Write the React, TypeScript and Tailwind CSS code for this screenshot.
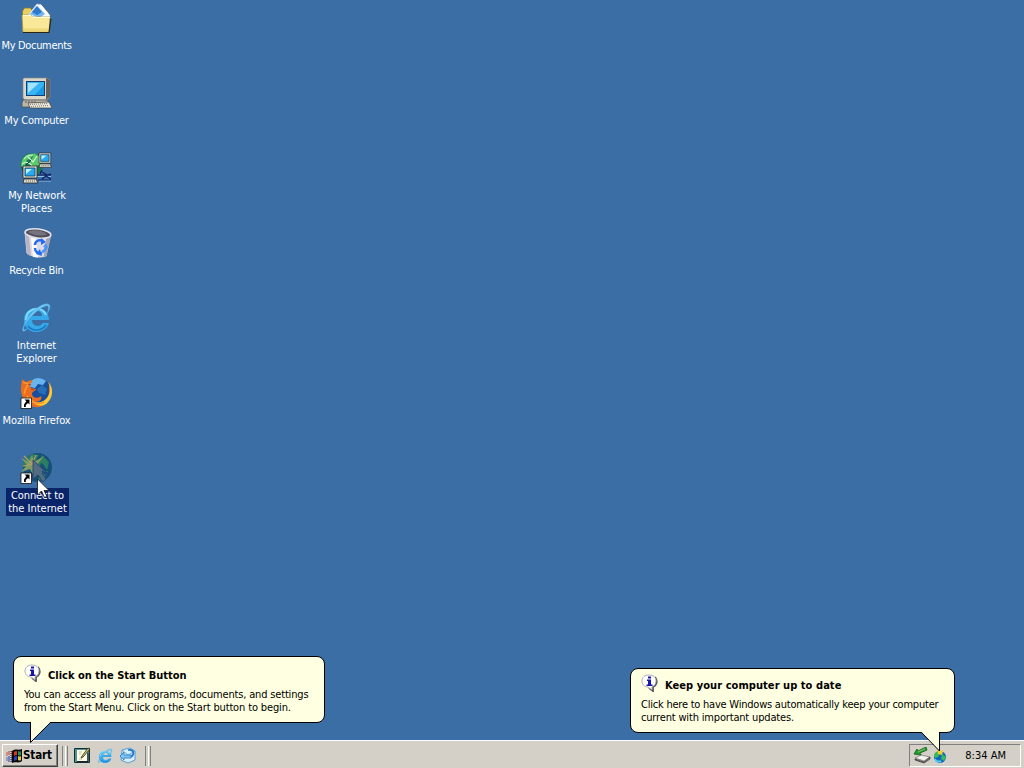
import type { ReactNode } from 'react';

const Documents = () => (
  <svg width="32" height="32" viewBox="0 0 32 32">
    <path d="M2.500 28V9l2-3h6l2 3h15v20z" fill="#e8cf60" stroke="#8a7a2a" strokeWidth=".8" />
    <path d="M5 17 17 2l4 1 9 11-5 5z" fill="#f4f8ff" stroke="#c8d8ea" strokeWidth=".8" />
    <path d="m10 12 7-8 8 8-6 4z" fill="#6fb2f0" />
    <path d="m12 10 5-6 5 6-5 3z" fill="#2f78cc" />
    <path d="m20 3 9 11" stroke="#fff" strokeWidth="2" />
    <path d="M2 13h9l2 2h17l-1 15H3z" fill="#f8e898" stroke="#a89c48" strokeWidth=".8" />
    <path d="M3 13.500h8l2 2h17" fill="none" stroke="#fffcd8" />
    <path d="M3 30.500h26l2-14" fill="none" stroke="#2c2810" strokeWidth="1.2" />
    <path d="M4 28h24" stroke="#ecd775" strokeWidth="3" />
  </svg>
);

const Computer = () => (
  <svg width="32" height="32" viewBox="0 0 32 32">
    <path d="M3 2 4 1h22l4 2v17l-3 3H5l-2-2z" fill="#d9d6ca" stroke="#8b8b85" strokeWidth=".7" />
    <path d="m26 1 4 2v17l-4 3z" fill="#62635f" />
    <path d="M6 4h19v15H6z" fill="#123c74" />
    <path d="M7 5h17v13H7z" fill="#37b5f4" />
    <path d="M8 6h11L8 16z" fill="#a4e4ff" />
    <path d="M15 18h9V8z" fill="#1a98e4" />
    <path d="M3 23h24l2 3v4H2v-4z" fill="#b9b5a8" stroke="#4c4b48" strokeWidth=".7" />
    <path d="M5 25h11" stroke="#59584f" strokeDasharray="2 1" />
    <path d="m8 26 21-1 3 6H10z" fill="#ece8dc" stroke="#3e3d3a" strokeWidth=".7" />
    <path d="m10 27.500 18-1M11 29.500l18-1" stroke="#77766f" strokeDasharray="1 1" />
  </svg>
);

const MiniPc = () => (
  <>
    <path d="M0 0h14v12H0z" fill="#e2dfd3" stroke="#252525" strokeWidth=".8" />
    <path d="M2 2h10v8H2z" fill="#27aaf0" stroke="#123763" strokeWidth=".8" />
    <path d="M3 3h6L3 8z" fill="#baf2ff" />
    <path d="M1 13h12l2 4H0z" fill="#dedacb" stroke="#292826" strokeWidth=".8" />
    <path d="M3 15h10" stroke="#68665e" strokeDasharray="1 1" />
  </>
);

const Network = () => (
  <svg width="32" height="32" viewBox="0 0 32 32">
    <circle cx="12" cy="12.500" r="11.500" fill="#18785c" />
    <path d="M2 8c3-5 7-7 12-6l-3 4-4 2-3 8-3-2zM14 1l6 4v7l-5 3-6-3 3-5z" fill="#5cc86c" />
    <path d="M4 7c2-3 5-4 9-4M8 5l5 5 4-6M2 12c4-3 8-1 11 3" stroke="#cbf8cb" strokeWidth="1.2" fill="none" />
    <path d="M2 15c1 4 2 6 4 7M11 8l-5 5" stroke="#0a463c" fill="none" />
    <path d="M17 24.500h14M19 29h12" stroke="#8ec4f0" />
    <path d="M17 23h14M18 28h13M22 18l-2 4M22 20l5 3 4-1M22 27l4-3 5 3" stroke="#101f5e" strokeWidth="1.2" fill="none" />
    <g transform="translate(19 1) scale(.84)"><MiniPc /></g>
    <g transform="translate(3 14)"><MiniPc /></g>
  </svg>
);

const Recycle = () => (
  <svg width="32" height="32" viewBox="0 0 32 32">
    <path d="m4.500 5 2 21c3 4 16 6 20 3l4.500-21z" fill="#dcdae6" />
    <path d="m5 7 2 20 4 2-2-20z" fill="#b7b5c5" />
    <path d="m31 9-4.500 20-3 1.500 3-20z" fill="#a5a4b4" />
    <path d="m11 11 2 19 5 .5-2-19z" fill="#fafaff" />
    <ellipse cx="18" cy="6.500" rx="13" ry="4.500" transform="rotate(7 18 6.5)" fill="#504e59" stroke="#e5e4ed" strokeWidth="1.5" />
    <path d="M8 5c4-3 14-2 19 2-5 3-15 1-19-2" fill="#75737d" />
    <path d="M15 18c0-4 4-6 8-4M15 21c0 4 3 6 7 5" fill="none" stroke="#246dec" strokeWidth="2.500" />
    <path d="m21 11 5 4-5 3zM22 29l-6-2 4-5z" fill="#246dec" />
    <path d="M26 19c0 3-1 5-4 6" fill="none" stroke="#4a94f7" strokeWidth="2.500" />
    <path d="m23 20 3-4 2 5z" fill="#4a94f7" />
  </svg>
);

const Explorer = ({ size = 32 }: { size?: number }) => (
  <svg width={size} height={size} viewBox="0 0 32 32">
    <path d="M29 18H12c0 6 7 8 11 3h6C25 34 4 33 4 18 4 2 29 2 29 18M12 14h10c0-6-9-7-10 0" fill="#36a9eb" fillRule="evenodd" />
    <path d="M6 18C6 10 12 6 19 7c4 1 6 3 7 6" fill="none" stroke="#7adafc" strokeWidth="2.200" />
    <path d="M26 23c-4 6-13 7-18 1" stroke="#1678c6" strokeWidth="1.500" fill="none" />
    <path d="M8 26c-5 6-7 3-4-3C8 12 22 0 28 2c4 1 1 7-1 10 2-6 2-9-1-8C19 6 8 16 4 25c-1 3 0 4 4 1" fill="#74c7f4" stroke="#3da0de" strokeWidth=".5" />
  </svg>
);

const Shortcut = () => (
  <g>
    <path d="M1 21h10.500v10.500H1z" fill="#fff" stroke="#111" strokeWidth=".8" />
    <path d="M4.500 22.500h5v5L8 26 5.800 28v2H4v-2.500L6.300 24.300z" fill="#000" />
  </g>
);

const Firefox = () => (
  <svg width="32" height="32" viewBox="0 0 32 32">
    <circle cx="18" cy="14" r="13" fill="#174f9e" />
    <path d="M10 5c4-5 11-5 16-1l-3 4-5-1-3 4-5-1z" fill="#68b5ee" />
    <path d="m22 8 5 4-2 6-6-2-2-4z" fill="#276fb5" />
    <path d="M29 5c4 7 3 16-2 21-7 7-20 5-24-5C-1 13 2 6 2 2c2 2 3 3 5 3 2-2 5-2 6-1-3 2-4 5-2 7l5 1c-1 3-4 2-4 5 0 4 6 5 9 2 2 5-5 7-9 5 9 4 17-1 17-10z" fill="#ec6d1f" />
    <path d="M28 5c4 7 2 17-7 20-4 1-7 0-9-2 2 6 11 8 16 2 5-5 6-14 0-20" fill="#ffca32" />
    <path d="M3 5c2 2 5 1 6 2-5 4-3 6-5 10M7 19c4 7 11 9 17 6" stroke="#ff9630" strokeWidth="1.700" fill="none" />
    <path d="m8 7 3 1M11 12l3 1" stroke="#a9451a" strokeWidth="1.200" />
    <Shortcut />
  </svg>
);

const Connect = () => (
  <svg width="32" height="32" viewBox="0 0 32 32">
    <circle cx="17.500" cy="15.500" r="14.500" fill="#164f78" />
    <path d="m4 8 8-6 7 1-3 5 5 3-3 8-5 3-4-6-7-2zM22 3l7 7-2 8-4-6-4-2zM20 20l8-1-4 8-6 2z" fill="#2b7e62" />
    <path d="m1 6 8 4 3-7 2 7 10-6-7 9 6 6-8-3-1 8-4-7-9 3 6-7z" fill="#809b65" />
    <path d="m4 4 8 8 4-9M3 14l10-2 7 6" stroke="#b79e66" strokeWidth="1.100" fill="none" />
    <path d="M13 8v19l5-4 5 7 3-3-4-6h5z" fill="#526d82" stroke="#263c70" strokeWidth=".8" />
    <path d="m22 19 5 4" stroke="#1b4a8d" strokeWidth="2" />
    <Shortcut />
  </svg>
);

const Info = () => (
  <svg width="17" height="18" viewBox="0 0 17 18">
    <path d="M14 3c3 4 2 8-2 10v4l-4-3" fill="none" stroke="#55555c" strokeWidth="1.800" />
    <path d="M8 1c4 0 7 2 7 6 0 3-2 5-4 6v3l-4-3c-4 0-6-3-6-6 0-4 3-6 7-6" fill="#fff" stroke="#9b9ba4" strokeWidth=".8" />
    <path d="M7 2.500h3v2H7zM6 5.500h4v5h1.500V12h-6v-1.500H7V7H6z" fill="#1717ae" />
  </svg>
);

const WindowsFlag = () => (
  <svg width="17" height="16" viewBox="0 0 17 16">
    <path d="M6 3c4-3 6 0 10-2v12c-4 3-6 0-10 2z" fill="#090909" />
    <path d="M8 4q1-1 3-1v4q-2 0-3 1z" fill="#df3326" />
    <path d="M12 3q2 1 3 0v4q-1 1-3 0z" fill="#1b974b" />
    <path d="M8 9q1-1 3-1v4q-2 0-3 1z" fill="#2a42bf" />
    <path d="M12 8q2 1 3 0v4q-1 1-3 0z" fill="#e4ce31" />
    <path d="M2 4h4M2 6h4" stroke="#bc3439" strokeDasharray="2 1" />
    <path d="M2 9h4M2 11h4M2 13h4" stroke="#2433ab" strokeDasharray="2 1" />
    <path d="M0 5h2M0 7h2" stroke="#c74c42" />
    <path d="M0 10h2M0 12h2" stroke="#5664c8" />
    <path d="M5 3v11" stroke="#111" strokeDasharray="1 1" />
  </svg>
);

const ShowDesktop = () => (
  <svg width="17" height="17" viewBox="0 0 17 17">
    <path d="M1 2h14v13H1z" fill="#4d9394" />
    <path d="M.5 1.500h15v14H.500z" stroke="#102e35" fill="none" />
    <path d="M3 3h10v11H3z" fill="#fffde5" />
    <path d="M3 14.500h11V6" stroke="#222" fill="none" />
    <path d="M5 5h3M5 7h2M5 12h3" stroke="#c5c199" />
    <path d="m7 11 1-2 6-8 2 1-7 8z" fill="#dac75b" stroke="#222" strokeWidth=".8" />
  </svg>
);

const Outlook = () => (
  <svg width="17" height="17" viewBox="0 0 17 17">
    <path d="M3 3 11 1l5 3v9l-7 3-7-3z" fill="#d9efff" stroke="#3989cd" strokeWidth=".8" />
    <path d="m3 3 6 5 7-4" stroke="#65aede" fill="none" />
    <path d="M9 3c6-1 7 4 3 7" fill="none" stroke="#1f78c8" strokeWidth="1.700" />
    <path d="M12 8H5V5L1 9l4 4v-2h7z" fill="#7ec5f2" stroke="#2579c2" strokeWidth=".8" />
  </svg>
);

const RemoveHardware = () => (
  <svg width="18" height="17" viewBox="0 0 18 17">
    <path d="m2 11 6-3 9 2-6 4z" fill="#f5f4ec" stroke="#777" strokeWidth=".8" />
    <path d="m2 12 9 3 6-5v2l-6 4-9-3z" fill="#8b8b88" stroke="#303030" strokeWidth=".7" />
    <path d="m13 0 1 3-7 3 1 2-7-1 3-5 1 2z" fill="#249b2d" stroke="#125c19" strokeWidth=".8" />
    <path d="m5 5 7-3" stroke="#74d267" />
  </svg>
);

const Update = () => (
  <svg width="14" height="16" viewBox="0 0 14 16">
    <circle cx="7" cy="9" r="6" fill="#1264bd" />
    <path d="M1 8c0-3 3-5 5-5l1 3-2 3-3 1zM9 6l4 3-2 4-3-2z" fill="#39b95b" />
    <path d="M2 11c1 3 4 3 6 2" stroke="#55cff1" strokeWidth="2" fill="none" />
    <path d="m4 1 6 2-1 4-4-1z" fill="#f3cf27" />
  </svg>
);

const Cursor = () => (
  <svg className="absolute left-[37px] top-[478px]" width="13" height="21" viewBox="0 0 13 21">
    <path d="M.5 1v16l4-4 3 6.500 2.500-1-3-6H12z" fill="#fff" stroke="#111" strokeWidth=".8" />
  </svg>
);

type Line = { text: string; className: string };

const desktopItems: { icon: ReactNode; lines: Line[]; selected?: boolean }[] = [
  { icon: <Documents />, lines: [{ text: 'My Documents', className: 'tracking-[-0.32px]' }] },
  { icon: <Computer />, lines: [{ text: 'My Computer', className: 'tracking-[-0.22px]' }] },
  {
    icon: <Network />,
    lines: [
      { text: 'My Network', className: 'ml-px tracking-[-0.12px]' },
      { text: 'Places', className: 'tracking-[-0.1px]' },
    ],
  },
  { icon: <Recycle />, lines: [{ text: 'Recycle Bin', className: 'tracking-[-0.25px]' }] },
  {
    icon: <Explorer />,
    lines: [
      { text: 'Internet', className: 'tracking-normal' },
      { text: 'Explorer', className: 'tracking-[-0.1px]' },
    ],
  },
  { icon: <Firefox />, lines: [{ text: 'Mozilla Firefox', className: 'tracking-[-0.13px]' }] },
  {
    icon: <Connect />,
    lines: [
      { text: 'Connect to', className: 'tracking-[-0.1px]' },
      { text: 'the Internet', className: 'tracking-normal' },
    ],
    selected: true,
  },
];

const Grip = () => (
  <div className="flex h-[20px] gap-[2px]">
    <div className="w-px bg-[#808080]" />
    <div className="w-[3px] border-l border-r border-l-white border-r-[#808080]" />
  </div>
);

export default function App() {
  return (
    <div className="relative flex h-[768px] w-[1024px] cursor-default flex-col overflow-hidden bg-[#3a6ea5] font-['DejaVu_Sans_Condensed','DejaVu_Sans',sans-serif] text-[11px] leading-[13px] [font-stretch:condensed]">
      <main className="flex flex-1 flex-col pt-[2px]">
        {desktopItems.map((item) => (
          <div key={item.lines[0].text} className="flex h-[75px] w-[73px] flex-col items-center text-white">
            <div className="mr-px h-[32px]">{item.icon}</div>
            <div className={`mt-[4px] flex flex-col items-center whitespace-nowrap p-px ${item.selected ? 'ml-[6px] w-[63px] self-start bg-[#0a246a]' : ''}`}>
              {item.lines.map((line) => <span key={line.text} className={line.className}>{line.text}</span>)}
            </div>
          </div>
        ))}
      </main>

      <footer className="flex h-[28px] items-center border-t border-white bg-[#d4d0c8] pl-[2px] pr-[3px] pt-[2px]">
        <button className="flex h-[23px] w-[56px] items-center border border-b-[#404040] border-l-white border-r-[#404040] border-t-white pl-[3px] font-bold text-black shadow-[inset_-1px_-1px_#808080]">
          <WindowsFlag />
          <span className="text-[11.5px] tracking-[-0.1px]">Start</span>
        </button>
        <div className="ml-[4px]"><Grip /></div>
        <div className="ml-[6px] flex items-center gap-[6px]">
          <ShowDesktop />
          <Explorer size={16} />
          <Outlook />
        </div>
        <div className="ml-[9px]"><Grip /></div>
        <div className="ml-auto flex h-[23px] w-[112px] items-center border border-b-white border-l-[#808080] border-r-white border-t-[#808080] pl-[3px]">
          <RemoveHardware />
          <div className="ml-[2px]"><Update /></div>
          <span className="ml-auto mr-[14px]">8:34 AM</span>
        </div>
      </footer>

      <section className="absolute left-[13px] top-[656px] h-[67px] w-[312px] rounded-[8px] border border-black bg-[#ffffe1] pl-[10px] pt-[7px] text-black">
        <div className="flex h-[24px]">
          <Info />
          <h2 className="ml-[7px] mt-[5px] whitespace-nowrap font-bold">Click on the Start Button</h2>
        </div>
        <p className="flex flex-col items-start whitespace-nowrap">
          <span className="tracking-[-0.165px]">You can access all your programs, documents, and settings</span>
          <span className="tracking-[-0.145px]">from the Start Menu. Click on the Start button to begin.</span>
        </p>
        <svg className="absolute left-[15px] top-[64px]" width="24" height="24" viewBox="0 0 24 24">
          <path d="M1.500 0v21L21.500 1V0z" fill="#ffffe1" />
          <path d="M1.500 1v20.500L21.500 1.500" fill="none" stroke="#000" />
        </svg>
      </section>

      <section className="absolute left-[630px] top-[668px] h-[65px] w-[325px] rounded-[8px] border border-black bg-[#ffffe1] pl-[10px] pt-[5px] text-black">
        <div className="flex h-[24px]">
          <Info />
          <h2 className="ml-[7px] mt-[5px] whitespace-nowrap font-bold tracking-[0.06px]">Keep your computer up to date</h2>
        </div>
        <p className="flex flex-col items-start whitespace-nowrap">
          <span className="tracking-[-0.225px]">Click here to have Windows automatically keep your computer</span>
          <span className="tracking-[-0.17px]">current with important updates.</span>
        </p>
        <svg className="absolute left-[289px] top-[62px]" width="22" height="22" viewBox="0 0 22 22">
          <path d="M1.500 0v1l18 18.500V0z" fill="#ffffe1" />
          <path d="m1.500 1.500 18 18.500V1" fill="none" stroke="#000" />
        </svg>
      </section>

      <Cursor />
    </div>
  );
}
